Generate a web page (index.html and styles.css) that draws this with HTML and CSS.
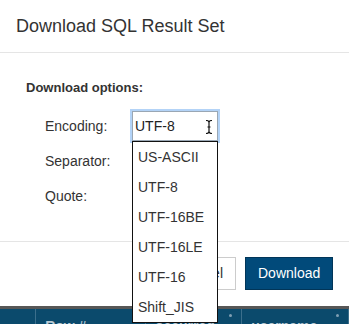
FILE: index.html
```html
<!DOCTYPE html>
<html>
<head>
<meta charset="utf-8">
<link rel="stylesheet" href="styles.css">
</head>
<body>
<div class="modal">
  <div class="modal-header">
    <h4 class="title">Download SQL Result Set</h4>
  </div>
  <div class="modal-body">
    <div class="section-title">Download options:</div>
    <div class="form">
      <label class="label">Encoding:</label>
      <div class="field">
        <div class="input focused">UTF-8
          <svg class="ibeam" width="8" height="14" viewBox="0 0 8 14"><path d="M1 0.5 Q4 0.5 4 2.5 Q4 0.5 7 0.5 M4 2.5 V11.5 M2.5 7 H5.5 M1 13.5 Q4 13.5 4 11.5 Q4 13.5 7 13.5" fill="none" stroke="#111" stroke-width="1.2"/></svg>
        </div>
      </div>
      <label class="label">Separator:</label>
      <div class="field"><div class="input"></div></div>
      <label class="label">Quote:</label>
      <div class="field"><div class="input"></div></div>
    </div>
  </div>
  <div class="modal-footer">
    <button class="btn btn-default">Cancel</button>
    <button class="btn btn-primary">Download</button>
  </div>
</div>
<div class="table-head">
  <div class="th th-0"></div>
  <div class="th th-1">Row #<span class="dot"></span></div>
  <div class="th th-2">occurred<span class="dot"></span></div>
  <div class="th th-3">username<span class="dot"></span></div>
</div>
<ul class="dropdown">
  <li>US-ASCII</li>
  <li>UTF-8</li>
  <li>UTF-16BE</li>
  <li>UTF-16LE</li>
  <li>UTF-16</li>
  <li>Shift_JIS</li>
</ul>
</body>
</html>
```
FILE: styles.css
```css
html, body {
  margin: 0;
  padding: 0;
  background: #fff;
  font-family: "Liberation Sans", Arial, sans-serif;
  color: #333;
  width: 349px;
  height: 324px;
  overflow: hidden;
}
.modal {
  background: #fff;
}
.modal-header {
  padding: 15px 16px;
  border-bottom: 1px solid #e5e5e5;
}
.title {
  margin: 0;
  font-size: 18px;
  line-height: 22px;
  font-weight: normal;
  color: #333;
}
.modal-body {
  padding: 26px 26px 30px 26px;
}
.section-title {
  font-size: 13px;
  font-weight: bold;
  line-height: 18px;
  color: #333;
}
.form {
  margin-top: 14px;
  margin-left: 19px;
  display: grid;
  grid-template-columns: 87px 86px;
  grid-auto-rows: 30px;
  row-gap: 5px;
}
.label {
  font-size: 14px;
  line-height: 30px;
  color: #333;
}
.input {
  box-sizing: border-box;
  height: 30px;
  width: 86px;
  border: 1px solid #bbb;
  padding: 0 0 0 2px;
  font-size: 14px;
  line-height: 28px;
  color: #222;
  position: relative;
}
.input.focused {
  box-shadow: 0 0 0 2px #b3d3f7;
  border-color: #9aa7b4;
}
.ibeam {
  position: absolute;
  right: 4px;
  top: 8px;
}
.modal-footer {
  border-top: 1px solid #e5e5e5;
  padding: 15px 16px 16px 16px;
  display: flex;
  justify-content: flex-end;
  gap: 9px;
}
.btn {
  font-family: "Liberation Sans", Arial, sans-serif;
  font-size: 14px;
  height: 33px;
  padding: 0 12px;
  border-radius: 0;
  line-height: 31px;
}
.btn-default {
  background: #fff;
  border: 1px solid #ccc;
  color: #333;
}
.btn-primary {
  background: #014a7a;
  border: 1px solid #013558;
  color: #fff;
  width: 88px;
}
.table-head {
  border-top: 3px solid #575757;
  background: #0b4a6c;
  height: 15px;
  overflow: hidden;
  display: flex;
}
.th {
  position: relative;
  box-sizing: border-box;
  border-right: 1px solid #3c6f8c;
  color: #b9c9d4;
  font-size: 14px;
  font-weight: bold;
  line-height: 16px;
  padding: 9px 0 0 9px;
}
.th-0 { width: 37px; }
.th-1 { width: 113px; }
.th-2 { width: 99px; }
.th-3 { width: 110px; }
.dot {
  position: absolute;
  right: 9px;
  top: 5px;
  width: 3px;
  height: 3px;
  background: #7f9fb3;
  border-radius: 50%;
}
.dropdown {
  position: absolute;
  left: 132px;
  top: 141px;
  width: 86px;
  box-sizing: border-box;
  margin: 0;
  padding: 0;
  list-style: none;
  background: #fff;
  border: 1px solid #111;
}
.dropdown li {
  height: 30px;
  line-height: 30px;
  padding-left: 5px;
  font-size: 14px;
  color: #333;
}
```
